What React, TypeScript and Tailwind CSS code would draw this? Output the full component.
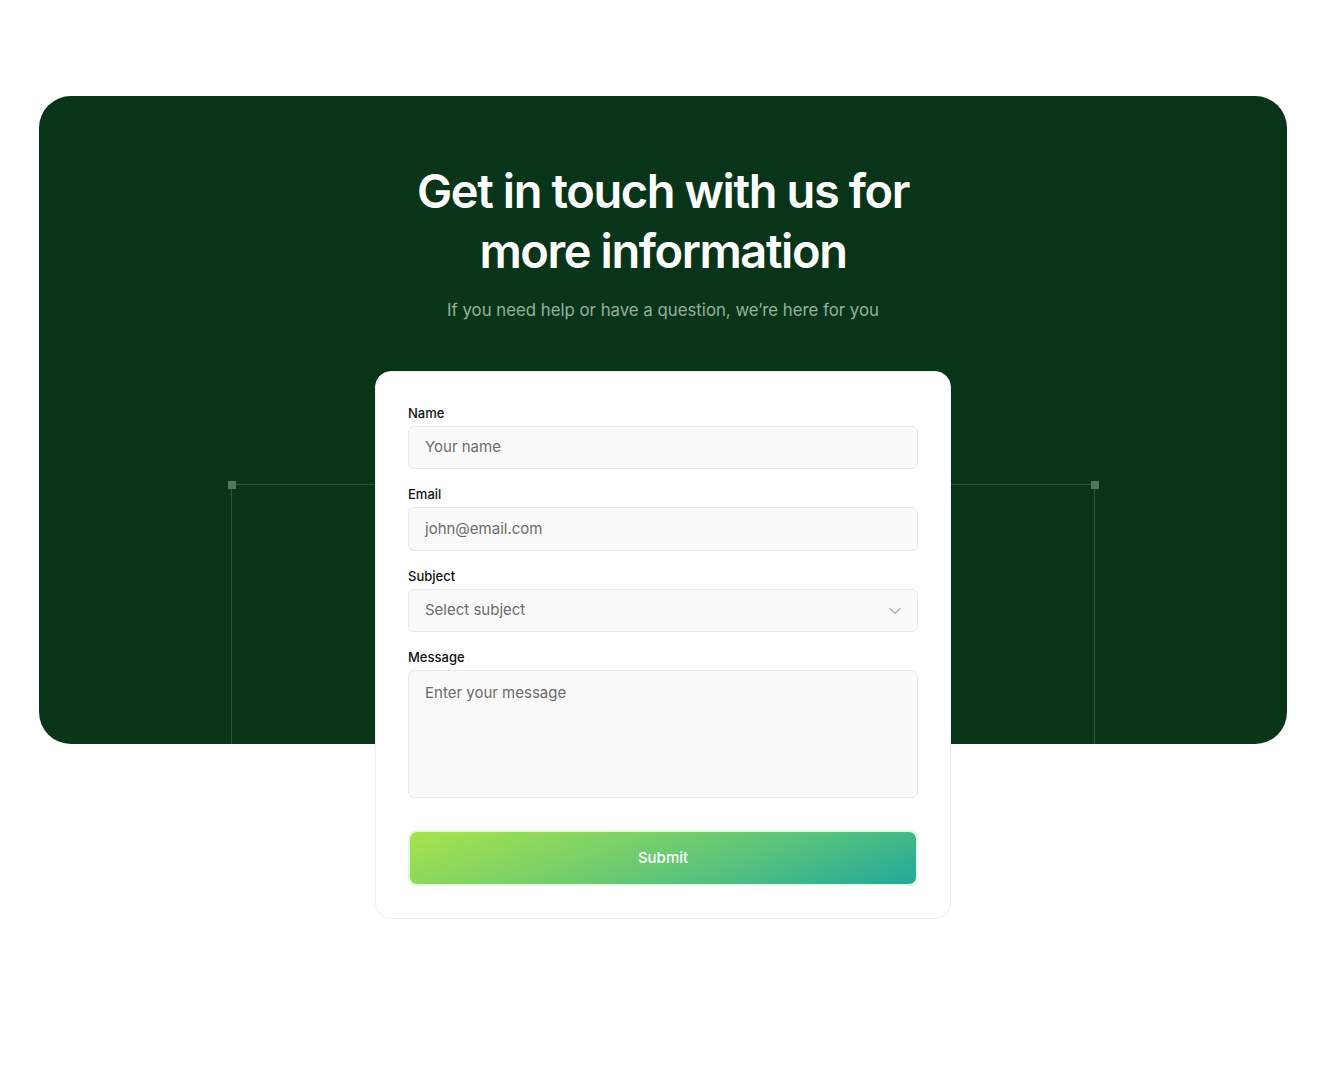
import React from "react";

function Field({ label, children }: { label: string; children: React.ReactNode }) {
  return (
    <div className="flex flex-col gap-[5px]">
      <label className="text-[13px] font-medium leading-[16px] text-[#111111]">{label}</label>
      {children}
    </div>
  );
}

export default function App() {
  return (
    <div
      className="min-h-[1079px] w-full bg-white px-[39px] pt-[96px]"
      style={{ fontFamily: "Inter, 'Noto Sans', sans-serif" }}
    >
      <div className="relative h-[648px] overflow-hidden rounded-[32px] bg-[#08351a]">
        <div className="pointer-events-none absolute bottom-0 left-[192px] right-[192px] top-[388px] border-l border-r border-t border-[#2c5638]">
          <span className="absolute -left-[4.5px] -top-[4.5px] h-[8px] w-[8px] bg-[#4a7a57]" />
          <span className="absolute -right-[4.5px] -top-[4.5px] h-[8px] w-[8px] bg-[#4a7a57]" />
        </div>
        <div className="relative flex flex-col items-center pt-[65px]">
          <h1 className="text-center text-[47px] font-semibold leading-[60px] tracking-[-0.03em] text-white">
            Get in touch with us for
            <br />
            more information
          </h1>
          <p className="mt-[17px] text-[16.8px] leading-[24px] text-[#94b19c]">
            If you need help or have a question, we’re here for you
          </p>
        </div>
      </div>
      <div className="relative z-10 mx-auto -mt-[373px] w-[576px] rounded-[16px] border border-[#efefef] bg-white px-[32px] pb-[32px] pt-[33px]">
        <div className="flex flex-col gap-[17px]">
          <Field label="Name">
            <div className="flex h-[43px] items-center rounded-[6px] border border-[#e9e9e9] bg-[#fafafa] px-[16px] text-[15px] text-[#6b6b6b]">
              Your name
            </div>
          </Field>
          <Field label="Email">
            <div className="flex h-[44px] items-center rounded-[6px] border border-[#e9e9e9] bg-[#fafafa] px-[16px] text-[15px] text-[#6b6b6b]">
              john@email.com
            </div>
          </Field>
          <Field label="Subject">
            <div className="flex h-[43px] items-center justify-between rounded-[6px] border border-[#e9e9e9] bg-[#fafafa] pl-[16px] pr-[12px] text-[15px] text-[#6b6b6b]">
              <span>Select subject</span>
              <svg width="20" height="20" viewBox="0 0 24 24" fill="none" stroke="#b0b0b0" strokeWidth="1.5" strokeLinecap="round" strokeLinejoin="round">
                <path d="M6 9l6 6 6-6" />
              </svg>
            </div>
          </Field>
          <Field label="Message">
            <div className="h-[128px] rounded-[6px] border border-[#e9e9e9] bg-[#fafafa] px-[16px] pt-[11px] text-[15px] text-[#6b6b6b]">
              Enter your message
            </div>
          </Field>
        </div>
        <div className="mt-[32px] h-[56px] rounded-[8px] bg-[#e6f8e4] p-[2px]">
          <div className="flex h-full items-center justify-center rounded-[7px] bg-[linear-gradient(160deg,#a8e34c_0%,#78cf6a_40%,#4fbe82_70%,#21a89c_100%)] text-[15px] font-medium text-white">
            Submit
          </div>
        </div>
      </div>
    </div>
  );
}
